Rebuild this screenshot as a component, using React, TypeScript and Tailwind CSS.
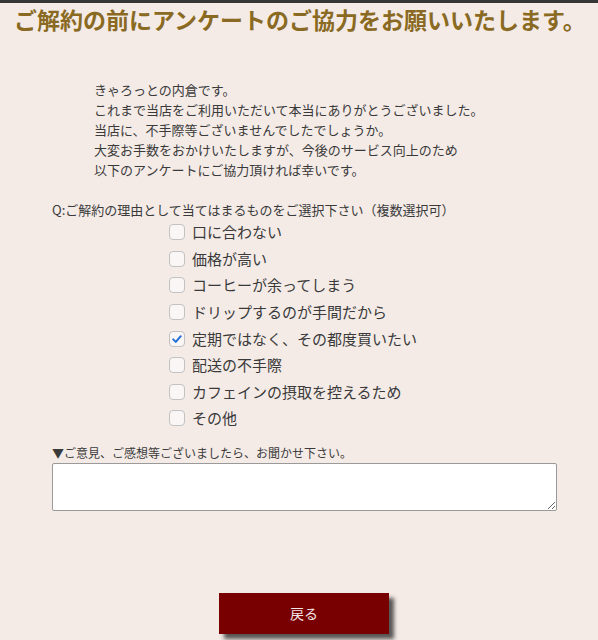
import React from "react";

const reasons = [
  { label: "口に合わない", checked: false },
  { label: "価格が高い", checked: false },
  { label: "コーヒーが余ってしまう", checked: false },
  { label: "ドリップするのが手間だから", checked: false },
  { label: "定期ではなく、その都度買いたい", checked: true },
  { label: "配送の不手際", checked: false },
  { label: "カフェインの摂取を控えるため", checked: false },
  { label: "その他", checked: false },
];

export default function App() {
  return (
    <div
      className="min-h-[640px] bg-[#f4ebe7] border-t-[3px] border-[#363636] text-[#3a3a3a]"
      style={{ fontFamily: '"Noto Sans CJK JP", "Noto Sans", sans-serif' }}
    >
      <h1 className="pl-[14px] pt-[1px] text-[23px] leading-[30px] font-bold text-[#8a6a22] whitespace-nowrap">
        ご解約の前にアンケートのご協力をお願いいたします。
      </h1>

      <div className="pl-[94px] mt-[46px] text-[13px] leading-[20px]">
        <p>きゃろっとの内倉です。</p>
        <p>これまで当店をご利用いただいて本当にありがとうございました。</p>
        <p>当店に、不手際等ございませんでしたでしょうか。</p>
        <p>大変お手数をおかけいたしますが、今後のサービス向上のため</p>
        <p>以下のアンケートにご協力頂ければ幸いです。</p>
      </div>

      <p className="pl-[52px] mt-[20px] text-[13px] leading-[19px]">
        Q:ご解約の理由として当てはまるものをご選択下さい（複数選択可）
      </p>

      <div className="pl-[169px] flex flex-col">
        {reasons.map((r) => (
          <label key={r.label} className="h-[26.6px] flex items-center gap-[7px]">
            <span className="shrink-0 box-border w-[16px] h-[16px] rounded-[4px] border border-[#c2c2c2] bg-[#f9f6f5] flex items-center justify-center">
              {r.checked && (
                <svg width="12" height="12" viewBox="0 0 12 12">
                  <path
                    d="M2.2 6.4 L4.8 8.9 L9.8 3.2"
                    fill="none"
                    stroke="#1f6fd6"
                    strokeWidth="2"
                    strokeLinecap="round"
                    strokeLinejoin="round"
                  />
                </svg>
              )}
            </span>
            <span className="text-[15px] leading-[20px] whitespace-nowrap">{r.label}</span>
          </label>
        ))}
      </div>

      <p className="pl-[52px] mt-[12px] text-[12px] leading-[18px]">
        ▼ご意見、ご感想等ございましたら、お聞かせ下さい。
      </p>
      <div className="pl-[52px] pr-[41px] mt-[1px]">
        <textarea className="block w-full h-[48px] bg-white border border-[#9a9a9a] rounded-[2px] resize-y outline-none" />
      </div>

      <div className="flex justify-center pl-[10px] mt-[82px]">
        <button className="w-[170px] h-[41px] bg-[#780000] text-[#f3e6e6] text-[14px] shadow-[5px_5px_4px_rgba(60,60,60,0.85)]">
          戻る
        </button>
      </div>
    </div>
  );
}
